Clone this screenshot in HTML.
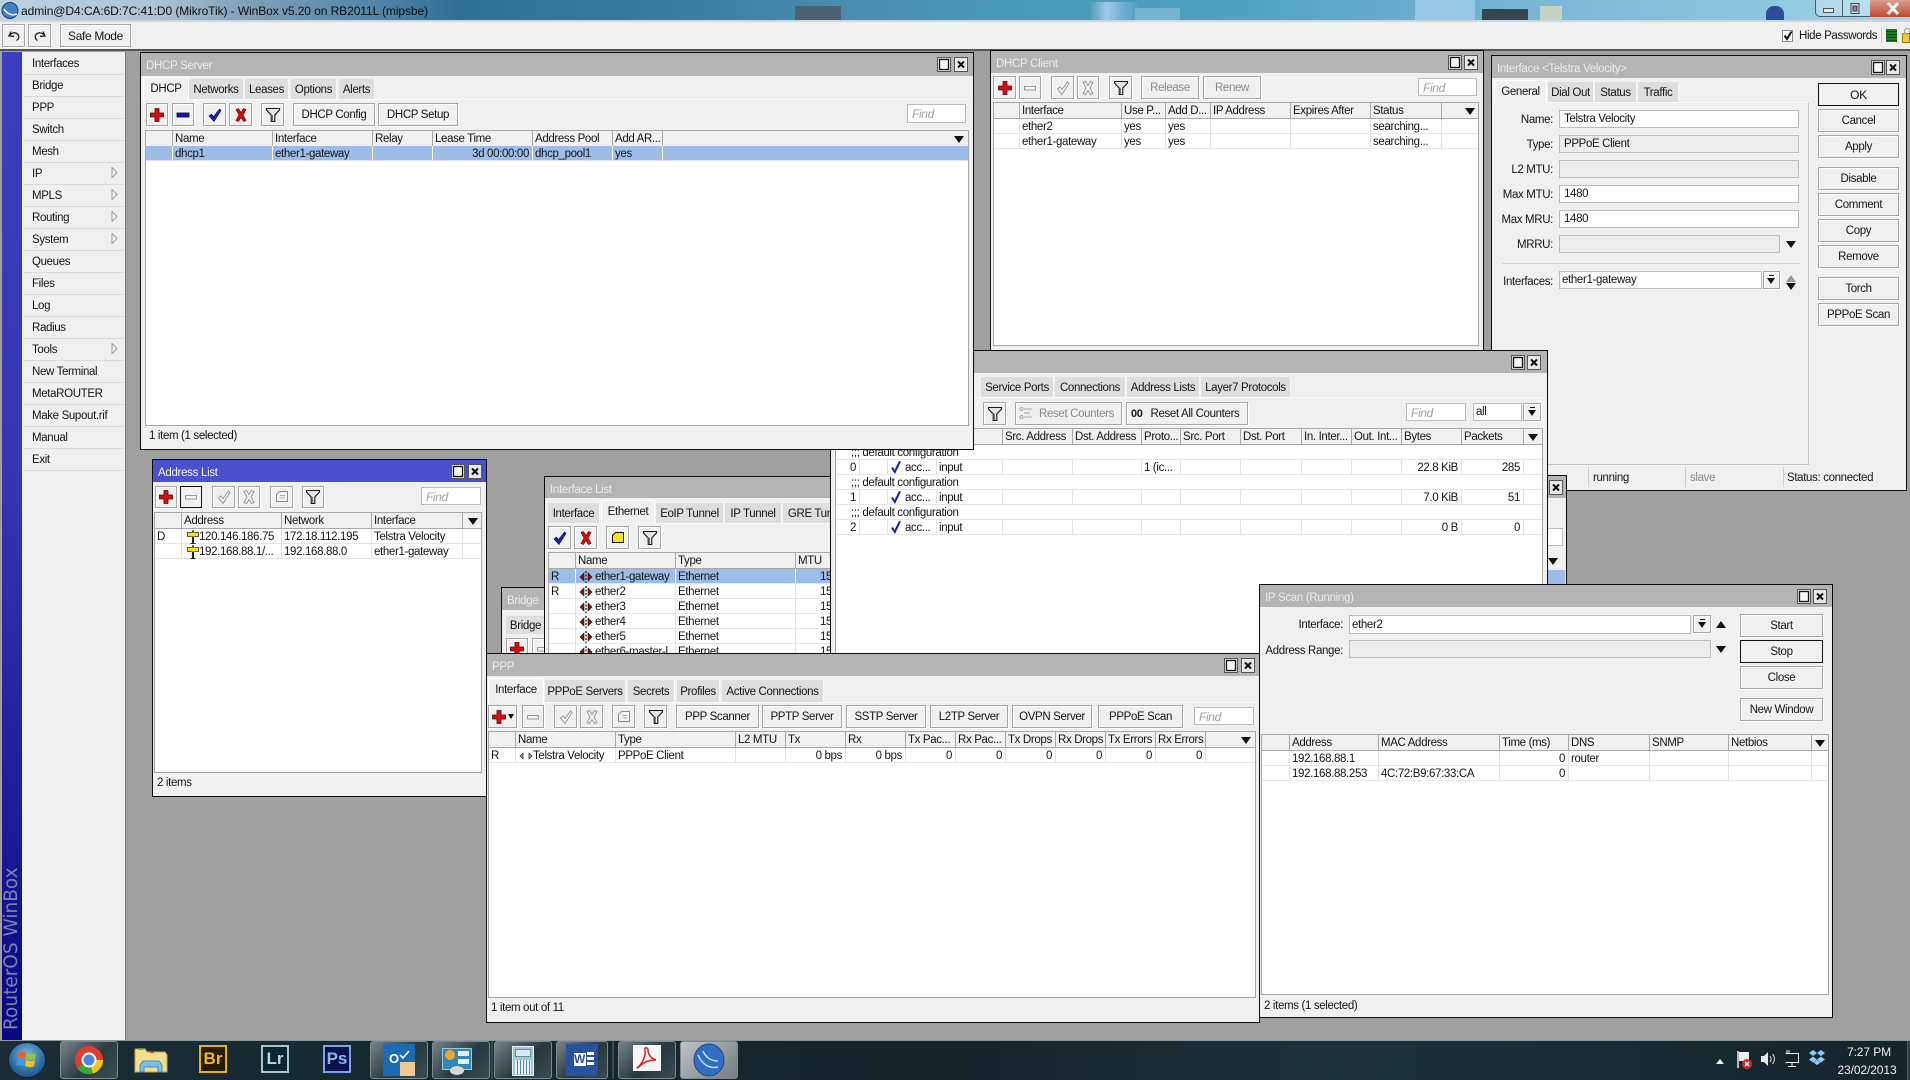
<!DOCTYPE html>
<html><head><meta charset="utf-8"><title>WinBox</title>
<style>
html,body{margin:0;padding:0;width:1910px;height:1080px;overflow:hidden;background:#a0a0a0;font:11.5px/14px "Liberation Sans",sans-serif;letter-spacing:-.35px;color:#151515}
div,b,i,span,svg{box-sizing:border-box}
.a{position:absolute}
.t{position:absolute;white-space:nowrap;font-weight:normal;font-style:normal}
.w{position:absolute;background:#f0f0f0;border:1px solid #0c0c0c}
.tb{position:absolute;background:#b4b4b4;color:#ececec;padding:1px 0 0 5px;line-height:24px;font-size:11.5px;letter-spacing:-.3px;white-space:nowrap;overflow:hidden}
.ctl{position:absolute;width:14px;height:15px}
.tab{position:absolute;background:#dedede;text-align:center;white-space:nowrap;overflow:hidden;border-right:1px solid #f8f8f8;font-weight:normal;padding-top:1px}
.on{background:#f0f0f0;border:1px solid #fff;border-bottom:0;z-index:1}
.ln{position:absolute;background:#fafafa;height:1px}
.bt{position:absolute;background:#f0f0f0;border:1px solid #a6a6a6;box-shadow:inset 1px 1px 0 #fff,1px 1px 0 #fff;text-align:center;white-space:nowrap;font-weight:normal;overflow:hidden;padding-top:1px}
.bt svg{position:absolute;left:50%;top:50%;margin:-8px 0 0 -8px;width:16px;height:16px}
.dk{border:1px solid #111;box-shadow:none}
.dis{color:#8a8a8a}
.fd{position:absolute;background:#fff;border:1px solid #bcbcbc;padding:1px 0 0 4px;white-space:nowrap;overflow:hidden;font-weight:normal;font-style:normal}
.gf{background:#ececec}
.fi{color:#a0a0a0;font-style:italic;font-size:12px}
.tbl{position:absolute;background:#fff;border:1px solid #a4a4a4}
.r{position:absolute;display:flex;height:15px;line-height:14px;white-space:nowrap;border-bottom:1px solid #e6e6e6}
.r>i{font-style:normal;display:block;border-right:1px solid #e2e2e2;padding:1px 0 0 2px;overflow:hidden;flex:none;height:100%}
.r>i.n{text-align:right;padding:1px 3px 0 0}
.h{background:#f0f0f0;height:17px;border-bottom:1px solid #a8a8a8;border-top:1px solid #a8a8a8}
.h>i{border-right:1px solid #a8a8a8}
.s{background:#9dbde8}
.s>i{border-right-color:#fff}
.lb{position:absolute;text-align:right;white-space:nowrap;font-weight:normal;margin-top:1px}
.m{position:absolute;left:24px;width:100px;height:22px;border-bottom:1px solid #dcdcdc;padding:1px 0 0 8px;line-height:21px;font-style:normal;font-weight:normal}
.m svg{position:absolute;left:87px;top:4px;width:7px;height:11px}
.tk{position:absolute;top:1041px;height:38px;width:58px;border:1px solid #7a8a90;border-radius:3px;background:linear-gradient(135deg,rgba(255,255,255,.42),rgba(255,255,255,.08) 55%,rgba(255,255,255,.16))}
.ic{position:absolute}
.lg{position:absolute;top:1045px;width:28px;height:28px;border:2px solid;text-align:center;font:bold 17px/24px "Liberation Sans",sans-serif;letter-spacing:0}
.ar{position:absolute;width:0;height:0;border-left:5px solid transparent;border-right:5px solid transparent;border-top:7px solid #111}
.up{border-top:0;border-bottom:7px solid #111}
.sb{position:absolute;white-space:nowrap;font-weight:normal;margin-top:1px}
.bl{position:absolute}
</style></head><body>
<svg width="0" height="0" style="position:absolute">
<symbol id="pl" viewBox="0 0 16 16"><path d="M6 1.500h4v4.500h4.500v4H10v4.500H6V10H1.500V6H6z" fill="#d90d0d" stroke="#4a0a0a" stroke-width=".8"/></symbol>
<symbol id="mi" viewBox="0 0 16 16"><rect x="2" y="6" width="12" height="4" fill="#1515b0" stroke="#060650" stroke-width=".8"/></symbol>
<symbol id="mg" viewBox="0 0 16 16"><rect x="2.500" y="6.500" width="11" height="3.500" fill="#f4f4f4" stroke="#9a9a9a"/></symbol>
<symbol id="ck" viewBox="0 0 16 16"><path d="M2 9l2.500-2 2 2.500L12.500 2 14 3.500 7 14.500z" fill="#1a24b0" stroke="#0a0a60" stroke-width=".6"/></symbol>
<symbol id="cg" viewBox="0 0 16 16"><path d="M2.500 9l2.500-2 2 2.500L12.500 2 14 3.500 7 14.500z" fill="#f4f4f4" stroke="#9a9a9a"/></symbol>
<symbol id="xx" viewBox="0 0 16 16"><path d="M3 2.500l2.500-1L8 5.500l2.500-4 2.500 1L10 8l3 5.500-2.500 1L8 10.500l-2.500 4-2.500-1L6 8z" fill="#d80c0c" stroke="#500" stroke-width=".6"/></symbol>
<symbol id="xg" viewBox="0 0 16 16"><path d="M3 2.500l2.500-1L8 5.500l2.500-4 2.500 1L10 8l3 5.500-2.500 1L8 10.500l-2.500 4-2.500-1L6 8z" fill="#f4f4f4" stroke="#9a9a9a"/></symbol>
<symbol id="fl" viewBox="0 0 16 16"><path d="M1.500 1.500h13v1.500L9.800 8v6.500H6.200V8L1.500 3z" fill="#dfe5e8" stroke="#181818" stroke-width="1.100"/><path d="M7.500 8v6" stroke="#777"/></symbol>
<symbol id="nt" viewBox="0 0 16 16"><path d="M2.500 5.500l3-3h8v10h-11z" fill="#f2e618" stroke="#111"/></symbol>
<symbol id="ng" viewBox="0 0 16 16"><path d="M2.500 5.500l3-3h8v10h-11z" fill="#f4f4f4" stroke="#8a8a8a"/><path d="M6 6.500h5M6 9h5" stroke="#aaa"/></symbol>
<symbol id="wm" viewBox="0 0 14 15"><rect x=".5" y=".5" width="13" height="14" fill="#e8e8e8" stroke="#555"/><rect x="2.500" y="2.500" width="9" height="10" fill="#f4f4f4" stroke="#111" stroke-width="1.300"/></symbol>
<symbol id="wc" viewBox="0 0 14 15"><rect x=".5" y=".5" width="13" height="14" fill="#e8e8e8" stroke="#555"/><path d="M4 4.500l6 6M10 4.500l-6 6" stroke="#111" stroke-width="2"/></symbol>
<symbol id="ma" viewBox="0 0 7 11"><path d="M1 .5v10l5-5z" fill="#f6f6f6" stroke="#9c9c9c"/></symbol>
<symbol id="et" viewBox="0 0 14 14"><path d="M5 3L1 7l4 4zM9 3l4 4-4 4z" fill="#8e1010" stroke="#111" stroke-width=".6"/><path d="M7 1v12" stroke="#111" stroke-width="1.200" stroke-dasharray="2 1.500"/></symbol>
<symbol id="ad" viewBox="0 0 14 14"><path d="M7 .5v13" stroke="#222" stroke-width="2"/><rect x="1.500" y="2.500" width="11" height="4" fill="#f6e21c" stroke="#333" stroke-width=".8"/><rect x="5.500" y="2.500" width="3" height="4" fill="#f6e21c"/><path d="M4.500 13.500h5" stroke="#222"/></symbol>
</svg>

<!-- title bar -->
<div class="a" style="left:0;top:0;width:1910px;height:21px;background:linear-gradient(90deg,#bcd2e2 0,#aec4d4 8%,#7fa0b8 13%,#4f83a6 20%,#2f6f95 24%,#3a7da2 36%,#4a8fb0 45%,#4a9ab8 55%,#4b9ebc 62%,#5aa6c6 68%,#6fb0d0 76%,#80bcd8 84%,#8cc6de 92%,#a8d8ea 100%)"></div>
<div class="a" style="left:795px;top:6px;width:46px;height:15px;background:#4a6272"></div>
<div class="a" style="left:1090px;top:2px;width:50px;height:19px;background:linear-gradient(90deg,#4b9ebc,#a4c8e6,#6faed2,#4b9ebc)"></div>
<div class="a" style="left:1135px;top:8px;width:45px;height:13px;background:#74b4d0"></div>
<div class="a" style="left:1415px;top:0;width:60px;height:21px;background:#95c8e4"></div>
<div class="a" style="left:1482px;top:9px;width:46px;height:12px;background:#36454f"></div>
<div class="a" style="left:1540px;top:6px;width:22px;height:15px;background:#c6d2c4"></div>
<div class="a" style="left:1766px;top:6px;width:18px;height:15px;background:#2a4c9a;border-radius:8px 8px 0 0"></div>
<div class="a" style="left:0;top:20px;width:1910px;height:2px;background:#c6d8e4"></div>
<svg class="ic" style="left:1px;top:1px" width="18" height="19" viewBox="0 0 18 19"><circle cx="9" cy="9.500" r="8" fill="#3f7fc4" stroke="#16446e"/><path d="M3 8c3 5 8 7 13 5" stroke="#e8f2fa" stroke-width="1.600" fill="none"/></svg>
<div class="t" style="left:21px;top:4px;font-size:12px;letter-spacing:-.08px;color:#0e0e0e">admin@D4:CA:6D:7C:41:D0 (MikroTik) - WinBox v5.20 on RB2011L (mipsbe)</div>
<div class="a" style="left:1815px;top:-1px;width:95px;height:18px;background:rgba(230,240,248,.35);border:1px solid #46586a;border-radius:0 0 5px 5px"></div>
<div class="a" style="left:1842px;top:0;width:1px;height:17px;background:#4a5a6a"></div>
<div class="a" style="left:1870px;top:0;width:40px;height:17px;background:linear-gradient(#d8a090,#c04a34)"></div>
<div class="a" style="left:1823px;top:8px;width:11px;height:5px;background:#e8e8e8;border:1px solid #555"></div>
<svg class="ic" style="left:1848px;top:1px" width="14" height="14" viewBox="0 0 14 14"><path d="M3 2.500h8v10H3z" fill="#d8dde2" stroke="#445"/><rect x="5" y="5" width="4" height="5" fill="#7a95aa" stroke="#334"/></svg>
<svg class="ic" style="left:1886px;top:2px" width="14" height="13" viewBox="0 0 14 13"><path d="M2 1l10 11M12 1L2 12" stroke="#f6f6f6" stroke-width="3"/></svg>

<!-- toolbar -->
<div class="a" style="left:0;top:22px;width:1910px;height:29px;background:#f0f0f0;border-bottom:2px solid #555"></div>
<b class="bt" style="left:2px;top:24px;width:23px;height:23px"><svg viewBox="0 0 16 16"><path d="M5 3.500L3 8l5 .3M3.500 7.500c2-3 6-3.500 8-1.500s1.500 5-1 6.500" fill="none" stroke="#222" stroke-width="1.300"/></svg></b>
<b class="bt" style="left:28px;top:24px;width:23px;height:23px"><svg viewBox="0 0 16 16"><path d="M11 3.500L13 8l-5 .3M12.500 7.500c-2-3-6-3.500-8-1.500s-1.500 5 1 6.500" fill="none" stroke="#222" stroke-width="1.300"/></svg></b>
<b class="bt" style="left:60px;top:24px;width:71px;height:23px;line-height:21px;font-size:12px">Safe Mode</b>
<div class="a" style="left:1782px;top:30px;width:11px;height:12px;background:#fff;border:1px solid #888"></div>
<svg class="ic" style="left:1782px;top:29px" width="12" height="13" viewBox="0 0 12 13"><path d="M2.500 6.500l2.500 3.500L9.500 2.500" fill="none" stroke="#111" stroke-width="2"/></svg>
<div class="t" style="left:1799px;top:29px;font-size:11.5px">Hide Passwords</div>
<div class="a" style="left:1881px;top:28px;width:1px;height:15px;background:#ccc"></div>
<div class="a" style="left:1886px;top:29px;width:11px;height:13px;background:repeating-linear-gradient(#1e7a1e 0,#1e7a1e 2px,#0e4f0e 2px,#0e4f0e 3px)"></div>
<div class="a" style="left:1902px;top:33px;width:8px;height:10px;background:#f2c63a;border:1px solid #a07a10"></div>
<div class="a" style="left:1904px;top:28px;width:6px;height:6px;border:1px solid #999;border-bottom:0;border-radius:3px 3px 0 0"></div>

<!-- sidebar -->
<div class="a" style="left:2px;top:52px;width:20px;height:988px;background:linear-gradient(#3d3dc0 0,#3434b4 45%,#1a1a98 80%,#060680 100%)"></div>
<div class="a" style="left:22px;top:52px;width:104px;height:988px;background:#f0f0f0;border-right:1px solid #777"></div>
<div class="t" style="left:1px;top:1030px;height:22px;transform-origin:0 0;transform:rotate(-90deg);font:18.5px/22px 'DejaVu Sans',sans-serif;letter-spacing:0;color:#7c82ac">RouterOS WinBox</div>
<b class="m" style="top:53px">Interfaces</b>
<b class="m" style="top:75px">Bridge</b>
<b class="m" style="top:97px">PPP</b>
<b class="m" style="top:119px">Switch</b>
<b class="m" style="top:141px">Mesh</b>
<b class="m" style="top:163px">IP<svg><use href="#ma"/></svg></b>
<b class="m" style="top:185px">MPLS<svg><use href="#ma"/></svg></b>
<b class="m" style="top:207px">Routing<svg><use href="#ma"/></svg></b>
<b class="m" style="top:229px">System<svg><use href="#ma"/></svg></b>
<b class="m" style="top:251px">Queues</b>
<b class="m" style="top:273px">Files</b>
<b class="m" style="top:295px">Log</b>
<b class="m" style="top:317px">Radius</b>
<b class="m" style="top:339px">Tools<svg><use href="#ma"/></svg></b>
<b class="m" style="top:361px">New Terminal</b>
<b class="m" style="top:383px">MetaROUTER</b>
<b class="m" style="top:405px">Make Supout.rif</b>
<b class="m" style="top:427px">Manual</b>
<b class="m" style="top:449px">Exit</b>

<!-- Bridge (back) -->
<div class="w" style="left:501px;top:587px;width:60px;height:100px"></div>
<div class="tb" style="left:502px;top:588px;width:58px;height:22px">Bridge</div>
<div class="tab" style="left:506px;top:616px;width:40px;height:18px;line-height:18px">Bridge</div>
<b class="bt" style="left:506px;top:638px;width:22px;height:22px"><svg><use href="#pl"/></svg></b>
<b class="bt" style="left:532px;top:638px;width:22px;height:22px"><svg><use href="#mg"/></svg></b>

<!-- Interface List -->
<div class="w" style="left:544px;top:476px;width:300px;height:200px"></div>
<div class="tb" style="left:545px;top:477px;width:298px;height:21px">Interface List</div>
<div class="tab" style="left:548px;top:503px;width:52px;height:20px;line-height:20px">Interface</div>
<div class="tab on" style="left:601px;top:500px;width:54px;height:24px;line-height:21px">Ethernet</div>
<div class="tab" style="left:656px;top:503px;width:68px;height:20px;line-height:20px">EoIP Tunnel</div>
<div class="tab" style="left:725px;top:503px;width:57px;height:20px;line-height:20px">IP Tunnel</div>
<div class="tab" style="left:783px;top:503px;width:70px;height:20px;line-height:20px">GRE Tunnel</div>
<div class="ln" style="left:545px;top:523px;width:290px"></div>
<b class="bt" style="left:548px;top:526px;width:23px;height:23px"><svg><use href="#ck"/></svg></b>
<b class="bt" style="left:574px;top:526px;width:23px;height:23px"><svg><use href="#xx"/></svg></b>
<b class="bt" style="left:606px;top:526px;width:23px;height:23px"><svg><use href="#nt"/></svg></b>
<b class="bt" style="left:638px;top:526px;width:23px;height:23px"><svg><use href="#fl"/></svg></b>
<div class="tbl" style="left:548px;top:552px;width:300px;height:120px"></div>
<div class="r h" style="left:549px;top:552px;width:300px"><i style="width:27px"></i><i style="width:100px">Name</i><i style="width:120px">Type</i><i style="width:50px">MTU</i></div>
<div class="r s" style="left:549px;top:569px;width:300px"><i style="width:27px">R</i><i style="width:100px;padding-left:19px">ether1-gateway</i><i style="width:120px">Ethernet</i><i style="width:50px;padding-left:24px">1500</i></div>
<div class="r" style="left:549px;top:584px;width:300px"><i style="width:27px">R</i><i style="width:100px;padding-left:19px">ether2</i><i style="width:120px">Ethernet</i><i style="width:50px;padding-left:24px">1500</i></div>
<div class="r" style="left:549px;top:599px;width:300px"><i style="width:27px"></i><i style="width:100px;padding-left:19px">ether3</i><i style="width:120px">Ethernet</i><i style="width:50px;padding-left:24px">1500</i></div>
<div class="r" style="left:549px;top:614px;width:300px"><i style="width:27px"></i><i style="width:100px;padding-left:19px">ether4</i><i style="width:120px">Ethernet</i><i style="width:50px;padding-left:24px">1500</i></div>
<div class="r" style="left:549px;top:629px;width:300px"><i style="width:27px"></i><i style="width:100px;padding-left:19px">ether5</i><i style="width:120px">Ethernet</i><i style="width:50px;padding-left:24px">1500</i></div>
<div class="r" style="left:549px;top:644px;width:300px"><i style="width:27px"></i><i style="width:100px;padding-left:19px">ether6-master-l</i><i style="width:120px">Ethernet</i><i style="width:50px;padding-left:24px">1500</i></div>
<svg class="ic" style="left:579px;top:570px" width="14" height="14"><use href="#et"/></svg>
<svg class="ic" style="left:579px;top:585px" width="14" height="14"><use href="#et"/></svg>
<svg class="ic" style="left:579px;top:600px" width="14" height="14"><use href="#et"/></svg>
<svg class="ic" style="left:579px;top:615px" width="14" height="14"><use href="#et"/></svg>
<svg class="ic" style="left:579px;top:630px" width="14" height="14"><use href="#et"/></svg>
<svg class="ic" style="left:579px;top:645px" width="14" height="14"><use href="#et"/></svg>

<!-- DHCP Client -->
<div class="w" style="left:990px;top:50px;width:494px;height:310px"></div>
<div class="tb" style="left:991px;top:51px;width:492px;height:22px">DHCP Client</div>
<svg class="ctl" style="left:1448px;top:55px"><use href="#wm"/></svg><svg class="ctl" style="left:1464px;top:55px"><use href="#wc"/></svg>
<b class="bt" style="left:993px;top:76px;width:23px;height:23px"><svg><use href="#pl"/></svg></b>
<b class="bt" style="left:1019px;top:76px;width:22px;height:23px"><svg><use href="#mg"/></svg></b>
<b class="bt" style="left:1051px;top:76px;width:23px;height:23px"><svg><use href="#cg"/></svg></b>
<b class="bt" style="left:1077px;top:76px;width:22px;height:23px"><svg><use href="#xg"/></svg></b>
<b class="bt" style="left:1109px;top:76px;width:23px;height:23px"><svg><use href="#fl"/></svg></b>
<b class="bt dis" style="left:1141px;top:76px;width:58px;height:23px;line-height:21px">Release</b>
<b class="bt dis" style="left:1203px;top:76px;width:58px;height:23px;line-height:21px">Renew</b>
<i class="fd fi" style="left:1418px;top:78px;width:59px;height:18px;line-height:17px">Find</i>
<div class="tbl" style="left:993px;top:102px;width:486px;height:244px"></div>
<div class="r h" style="left:994px;top:102px;width:484px"><i style="width:26px"></i><i style="width:102px">Interface</i><i style="width:44px">Use P...</i><i style="width:45px">Add D...</i><i style="width:80px">IP Address</i><i style="width:80px">Expires After</i><i style="width:71px">Status</i></div>
<div class="r" style="left:994px;top:119px;width:484px"><i style="width:26px"></i><i style="width:102px">ether2</i><i style="width:44px">yes</i><i style="width:45px">yes</i><i style="width:80px"></i><i style="width:80px"></i><i style="width:71px">searching...</i></div>
<div class="r" style="left:994px;top:134px;width:484px"><i style="width:26px"></i><i style="width:102px">ether1-gateway</i><i style="width:44px">yes</i><i style="width:45px">yes</i><i style="width:80px"></i><i style="width:80px"></i><i style="width:71px">searching...</i></div>
<div class="ar" style="left:1465px;top:108px"></div>

<!-- Interface Telstra -->
<div class="w" style="left:1491px;top:55px;width:416px;height:436px"></div>
<div class="tb" style="left:1492px;top:56px;width:414px;height:22px">Interface &lt;Telstra Velocity&gt;</div>
<svg class="ctl" style="left:1871px;top:60px"><use href="#wm"/></svg><svg class="ctl" style="left:1886px;top:60px"><use href="#wc"/></svg>
<div class="a" style="left:1494px;top:102px;width:315px;height:363px;border-right:1px solid #c4c4c4;border-bottom:1px solid #c4c4c4;border-top:1px solid #fafafa"></div>
<div class="tab on" style="left:1494px;top:80px;width:53px;height:23px;line-height:20px">General</div>
<div class="tab" style="left:1548px;top:82px;width:46px;height:20px;line-height:20px">Dial Out</div>
<div class="tab" style="left:1595px;top:82px;width:42px;height:20px;line-height:20px">Status</div>
<div class="tab" style="left:1638px;top:82px;width:41px;height:20px;line-height:20px">Traffic</div>
<b class="lb" style="right:357px;top:112px">Name:</b><i class="fd" style="left:1559px;top:110px;width:240px;height:18px;line-height:15px">Telstra Velocity</i>
<b class="lb" style="right:357px;top:137px">Type:</b><i class="fd gf" style="left:1559px;top:135px;width:240px;height:18px;line-height:15px">PPPoE Client</i>
<b class="lb" style="right:357px;top:162px">L2 MTU:</b><i class="fd gf" style="left:1559px;top:160px;width:240px;height:18px"></i>
<b class="lb" style="right:357px;top:187px">Max MTU:</b><i class="fd" style="left:1559px;top:185px;width:240px;height:18px;line-height:15px">1480</i>
<b class="lb" style="right:357px;top:212px">Max MRU:</b><i class="fd" style="left:1559px;top:210px;width:240px;height:18px;line-height:15px">1480</i>
<b class="lb" style="right:357px;top:237px">MRRU:</b><i class="fd gf" style="left:1559px;top:235px;width:221px;height:18px"></i>
<div class="ar" style="left:1786px;top:241px"></div>
<div class="a" style="left:1502px;top:263px;width:298px;height:1px;background:#d4d4d4"></div>
<b class="lb" style="right:357px;top:274px">Interfaces:</b><i class="fd" style="left:1559px;top:271px;width:203px;height:18px;line-height:15px;padding-left:2px">ether1-gateway</i>
<b class="bt" style="left:1763px;top:271px;width:17px;height:18px"><span class="ar" style="left:3px;top:6px;border-left-width:4px;border-right-width:4px;border-top-width:6px"></span><span class="a" style="left:5px;top:3px;width:5px;height:1px;background:#111"></span></b>
<div class="ar up" style="left:1786px;top:275px;border-bottom-color:#999"></div><div class="ar" style="left:1786px;top:283px"></div>
<b class="bt dk" style="left:1818px;top:83px;width:81px;height:23px;line-height:20px;font-size:12px">OK</b>
<b class="bt" style="left:1818px;top:109px;width:81px;height:23px;line-height:20px">Cancel</b>
<b class="bt" style="left:1818px;top:135px;width:81px;height:23px;line-height:20px">Apply</b>
<b class="bt" style="left:1818px;top:167px;width:81px;height:23px;line-height:20px">Disable</b>
<b class="bt" style="left:1818px;top:193px;width:81px;height:23px;line-height:20px">Comment</b>
<b class="bt" style="left:1818px;top:219px;width:81px;height:23px;line-height:20px">Copy</b>
<b class="bt" style="left:1818px;top:245px;width:81px;height:23px;line-height:20px">Remove</b>
<b class="bt" style="left:1818px;top:277px;width:81px;height:23px;line-height:20px">Torch</b>
<b class="bt" style="left:1818px;top:303px;width:81px;height:23px;line-height:20px">PPPoE Scan</b>
<div class="a" style="left:1588px;top:467px;width:1px;height:20px;background:#cfcfcf"></div>
<div class="a" style="left:1685px;top:467px;width:1px;height:20px;background:#cfcfcf"></div>
<div class="a" style="left:1783px;top:467px;width:1px;height:20px;background:#cfcfcf"></div>
<div class="sb" style="left:1593px;top:470px">running</div>
<div class="sb dis" style="left:1690px;top:470px">slave</div>
<div class="sb" style="left:1787px;top:470px">Status: connected</div>

<!-- back interface window sliver -->
<div class="w" style="left:1530px;top:475px;width:37px;height:120px"></div>
<div class="a" style="left:1531px;top:476px;width:35px;height:22px;background:#b4b4b4"></div>
<svg class="ctl" style="left:1549px;top:480px"><use href="#wc"/></svg>
<div class="a" style="left:1545px;top:528px;width:18px;height:18px;background:#fff;border:1px solid #bbb"></div>
<div class="ar" style="left:1548px;top:558px"></div>
<div class="a" style="left:1545px;top:570px;width:20px;height:15px;background:#9dbde8"></div>

<!-- Firewall -->
<div class="w" style="left:830px;top:350px;width:718px;height:320px"></div>
<div class="tb" style="left:831px;top:351px;width:716px;height:22px"></div>
<svg class="ctl" style="left:1511px;top:355px"><use href="#wm"/></svg><svg class="ctl" style="left:1527px;top:355px"><use href="#wc"/></svg>
<div class="tab" style="left:981px;top:377px;width:73px;height:20px;line-height:20px">Service Ports</div>
<div class="tab" style="left:1055px;top:377px;width:71px;height:20px;line-height:20px">Connections</div>
<div class="tab" style="left:1127px;top:377px;width:73px;height:20px;line-height:20px">Address Lists</div>
<div class="tab" style="left:1201px;top:377px;width:90px;height:20px;line-height:20px">Layer7 Protocols</div>
<div class="ln" style="left:975px;top:397px;width:570px"></div>
<b class="bt" style="left:983px;top:402px;width:23px;height:23px"><svg><use href="#fl"/></svg></b>
<b class="bt dis" style="left:1015px;top:402px;width:107px;height:23px;line-height:21px;padding-left:16px">Reset Counters</b>
<svg class="ic" style="left:1019px;top:406px" width="14" height="14" viewBox="0 0 14 14"><path d="M5 3h8M5 7h6M5 11h8" stroke="#a8a8a8"/><circle cx="2.500" cy="3" r="1.500" fill="none" stroke="#a8a8a8"/><circle cx="2.500" cy="11" r="1.500" fill="none" stroke="#a8a8a8"/></svg>
<b class="bt" style="left:1126px;top:402px;width:122px;height:23px;line-height:21px;padding-left:16px">Reset All Counters</b>
<span class="t" style="left:1131px;top:407px;font-weight:bold;font-size:11px">00</span>
<i class="fd fi" style="left:1406px;top:403px;width:60px;height:18px;line-height:17px">Find</i>
<i class="fd" style="left:1473px;top:403px;width:49px;height:18px;line-height:15px;padding-left:2px">all</i>
<b class="bt" style="left:1523px;top:403px;width:18px;height:18px"><span class="ar" style="left:4px;top:6px;border-left-width:4px;border-right-width:4px;border-top-width:6px"></span><span class="a" style="left:6px;top:3px;width:5px;height:1px;background:#111"></span></b>
<div class="tbl" style="left:835px;top:428px;width:708px;height:240px"></div>
<div class="r h" style="left:836px;top:428px;width:706px"><i style="width:167px"></i><i style="width:70px">Src. Address</i><i style="width:69px">Dst. Address</i><i style="width:39px">Proto...</i><i style="width:60px">Src. Port</i><i style="width:61px">Dst. Port</i><i style="width:50px">In. Inter...</i><i style="width:50px">Out. Int...</i><i style="width:60px">Bytes</i><i style="width:62px">Packets</i></div>
<div class="ar" style="left:1528px;top:434px"></div>
<div class="r" style="left:836px;top:445px;width:706px;padding:1px 0 0 15px">;;; default configuration</div>
<div class="r" style="left:836px;top:460px;width:706px"><i style="width:24px" class="n">0</i><i style="width:28px"></i><i style="width:49px;padding-left:17px">acc...</i><i style="width:66px">input</i><i style="width:70px"></i><i style="width:69px"></i><i style="width:39px">1 (ic...</i><i style="width:60px"></i><i style="width:61px"></i><i style="width:50px"></i><i style="width:50px"></i><i style="width:60px" class="n">22.8 KiB</i><i style="width:62px" class="n">285</i></div>
<div class="r" style="left:836px;top:475px;width:706px;padding:1px 0 0 15px">;;; default configuration</div>
<div class="r" style="left:836px;top:490px;width:706px"><i style="width:24px" class="n">1</i><i style="width:28px"></i><i style="width:49px;padding-left:17px">acc...</i><i style="width:66px">input</i><i style="width:70px"></i><i style="width:69px"></i><i style="width:39px"></i><i style="width:60px"></i><i style="width:61px"></i><i style="width:50px"></i><i style="width:50px"></i><i style="width:60px" class="n">7.0 KiB</i><i style="width:62px" class="n">51</i></div>
<div class="r" style="left:836px;top:505px;width:706px;padding:1px 0 0 15px">;;; default configuration</div>
<div class="r" style="left:836px;top:520px;width:706px"><i style="width:24px" class="n">2</i><i style="width:28px"></i><i style="width:49px;padding-left:17px">acc...</i><i style="width:66px">input</i><i style="width:70px"></i><i style="width:69px"></i><i style="width:39px"></i><i style="width:60px"></i><i style="width:61px"></i><i style="width:50px"></i><i style="width:50px"></i><i style="width:60px" class="n">0 B</i><i style="width:62px" class="n">0</i></div>
<svg class="ic" style="left:890px;top:460px" width="12" height="15" viewBox="0 0 12 15"><path d="M1 8l2-1 1.500 3L9 1l2 .5L5 14z" fill="#1a24b0"/></svg>
<svg class="ic" style="left:890px;top:490px" width="12" height="15" viewBox="0 0 12 15"><path d="M1 8l2-1 1.500 3L9 1l2 .5L5 14z" fill="#1a24b0"/></svg>
<svg class="ic" style="left:890px;top:520px" width="12" height="15" viewBox="0 0 12 15"><path d="M1 8l2-1 1.500 3L9 1l2 .5L5 14z" fill="#1a24b0"/></svg>

<!-- DHCP Server -->
<div class="w" style="left:140px;top:52px;width:834px;height:398px"></div>
<div class="tb" style="left:141px;top:53px;width:832px;height:23px">DHCP Server</div>
<svg class="ctl" style="left:937px;top:57px"><use href="#wm"/></svg><svg class="ctl" style="left:954px;top:57px"><use href="#wc"/></svg>
<div class="ln" style="left:143px;top:99px;width:826px"></div>
<div class="tab on" style="left:143px;top:77px;width:46px;height:23px;line-height:20px">DHCP</div>
<div class="tab" style="left:189px;top:79px;width:55px;height:20px;line-height:20px">Networks</div>
<div class="tab" style="left:245px;top:79px;width:44px;height:20px;line-height:20px">Leases</div>
<div class="tab" style="left:291px;top:79px;width:46px;height:20px;line-height:20px">Options</div>
<div class="tab" style="left:339px;top:79px;width:36px;height:20px;line-height:20px">Alerts</div>
<b class="bt" style="left:146px;top:103px;width:22px;height:23px"><svg><use href="#pl"/></svg></b>
<b class="bt" style="left:172px;top:103px;width:22px;height:23px"><svg><use href="#mi"/></svg></b>
<b class="bt" style="left:203px;top:103px;width:23px;height:23px"><svg><use href="#ck"/></svg></b>
<b class="bt" style="left:229px;top:103px;width:23px;height:23px"><svg><use href="#xx"/></svg></b>
<b class="bt" style="left:261px;top:103px;width:23px;height:23px"><svg><use href="#fl"/></svg></b>
<b class="bt" style="left:293px;top:103px;width:82px;height:23px;line-height:21px">DHCP Config</b>
<b class="bt" style="left:378px;top:103px;width:80px;height:23px;line-height:21px">DHCP Setup</b>
<i class="fd fi" style="left:907px;top:104px;width:59px;height:19px;line-height:17px">Find</i>
<div class="tbl" style="left:145px;top:130px;width:824px;height:296px"></div>
<div class="r h" style="left:146px;top:130px;width:822px"><i style="width:27px"></i><i style="width:100px">Name</i><i style="width:100px">Interface</i><i style="width:60px">Relay</i><i style="width:100px">Lease Time</i><i style="width:80px">Address Pool</i><i style="width:50px">Add AR...</i></div>
<div class="r s" style="left:146px;top:146px;width:822px"><i style="width:27px"></i><i style="width:100px">dhcp1</i><i style="width:100px">ether1-gateway</i><i style="width:60px"></i><i style="width:100px" class="n">3d 00:00:00</i><i style="width:80px">dhcp_pool1</i><i style="width:50px">yes</i></div>
<div class="ar" style="left:954px;top:136px"></div>
<div class="sb" style="left:149px;top:428px">1 item (1 selected)</div>

<!-- PPP -->
<div class="w" style="left:486px;top:653px;width:774px;height:370px"></div>
<div class="tb" style="left:487px;top:654px;width:772px;height:22px">PPP</div>
<svg class="ctl" style="left:1224px;top:658px"><use href="#wm"/></svg><svg class="ctl" style="left:1241px;top:658px"><use href="#wc"/></svg>
<div class="ln" style="left:488px;top:702px;width:768px"></div>
<div class="tab on" style="left:488px;top:678px;width:56px;height:25px;line-height:21px">Interface</div>
<div class="tab" style="left:545px;top:680px;width:81px;height:22px;line-height:22px">PPPoE Servers</div>
<div class="tab" style="left:628px;top:680px;width:47px;height:22px;line-height:22px">Secrets</div>
<div class="tab" style="left:677px;top:680px;width:43px;height:22px;line-height:22px">Profiles</div>
<div class="tab" style="left:722px;top:680px;width:102px;height:22px;line-height:22px">Active Connections</div>
<b class="bt" style="left:488px;top:705px;width:29px;height:23px"><svg style="left:2px;margin-left:0"><use href="#pl"/></svg><span class="ar" style="left:19px;top:8px;border-left-width:3px;border-right-width:3px;border-top-width:5px"></span></b>
<b class="bt" style="left:522px;top:705px;width:22px;height:23px"><svg><use href="#mg"/></svg></b>
<b class="bt" style="left:554px;top:705px;width:23px;height:23px"><svg><use href="#cg"/></svg></b>
<b class="bt" style="left:580px;top:705px;width:23px;height:23px"><svg><use href="#xg"/></svg></b>
<b class="bt" style="left:612px;top:705px;width:23px;height:23px"><svg><use href="#ng"/></svg></b>
<b class="bt" style="left:644px;top:705px;width:23px;height:23px"><svg><use href="#fl"/></svg></b>
<b class="bt" style="left:676px;top:705px;width:83px;height:23px;line-height:21px">PPP Scanner</b>
<b class="bt" style="left:762px;top:705px;width:80px;height:23px;line-height:21px">PPTP Server</b>
<b class="bt" style="left:846px;top:705px;width:80px;height:23px;line-height:21px">SSTP Server</b>
<b class="bt" style="left:930px;top:705px;width:78px;height:23px;line-height:21px">L2TP Server</b>
<b class="bt" style="left:1012px;top:705px;width:80px;height:23px;line-height:21px">OVPN Server</b>
<b class="bt" style="left:1098px;top:705px;width:85px;height:23px;line-height:21px">PPPoE Scan</b>
<i class="fd fi" style="left:1194px;top:707px;width:60px;height:18px;line-height:17px">Find</i>
<div class="tbl" style="left:488px;top:731px;width:768px;height:267px"></div>
<div class="r h" style="left:489px;top:731px;width:766px"><i style="width:27px"></i><i style="width:100px">Name</i><i style="width:120px">Type</i><i style="width:50px">L2 MTU</i><i style="width:60px">Tx</i><i style="width:60px">Rx</i><i style="width:50px">Tx Pac...</i><i style="width:50px">Rx Pac...</i><i style="width:50px">Tx Drops</i><i style="width:50px">Rx Drops</i><i style="width:50px">Tx Errors</i><i style="width:50px">Rx Errors</i></div>
<div class="r" style="left:489px;top:748px;width:766px"><i style="width:27px">R</i><i style="width:100px;padding-left:17px">Telstra Velocity</i><i style="width:120px">PPPoE Client</i><i style="width:50px"></i><i style="width:60px" class="n">0 bps</i><i style="width:60px" class="n">0 bps</i><i style="width:50px" class="n">0</i><i style="width:50px" class="n">0</i><i style="width:50px" class="n">0</i><i style="width:50px" class="n">0</i><i style="width:50px" class="n">0</i><i style="width:50px" class="n">0</i></div>
<svg class="ic" style="left:519px;top:750px" width="14" height="12" viewBox="0 0 14 12"><path d="M4 3L1 6l3 3zM10 3l3 3-3 3z" fill="#999" stroke="#333" stroke-width=".7"/></svg>
<div class="ar" style="left:1241px;top:737px"></div>
<div class="sb" style="left:491px;top:1000px">1 item out of 11</div>

<!-- IP Scan -->
<div class="w" style="left:1259px;top:584px;width:574px;height:434px"></div>
<div class="tb" style="left:1260px;top:585px;width:572px;height:22px">IP Scan (Running)</div>
<svg class="ctl" style="left:1797px;top:589px"><use href="#wm"/></svg><svg class="ctl" style="left:1813px;top:589px"><use href="#wc"/></svg>
<b class="lb" style="right:567px;top:617px">Interface:</b><i class="fd" style="left:1349px;top:615px;width:342px;height:19px;line-height:16px;padding-left:2px">ether2</i>
<b class="bt" style="left:1693px;top:615px;width:18px;height:18px"><span class="ar" style="left:4px;top:6px;border-left-width:4px;border-right-width:4px;border-top-width:6px"></span><span class="a" style="left:6px;top:3px;width:5px;height:1px;background:#111"></span></b>
<div class="ar up" style="left:1716px;top:621px"></div>
<b class="lb" style="right:567px;top:643px">Address Range:</b><i class="fd gf" style="left:1349px;top:640px;width:362px;height:18px"></i>
<div class="ar" style="left:1716px;top:646px"></div>
<b class="bt" style="left:1740px;top:614px;width:83px;height:23px;line-height:21px">Start</b>
<b class="bt dk" style="left:1740px;top:640px;width:83px;height:23px;line-height:21px">Stop</b>
<b class="bt" style="left:1740px;top:666px;width:83px;height:23px;line-height:21px">Close</b>
<b class="bt" style="left:1740px;top:698px;width:83px;height:23px;line-height:21px">New Window</b>
<div class="tbl" style="left:1261px;top:734px;width:568px;height:261px"></div>
<div class="r h" style="left:1262px;top:734px;width:566px"><i style="width:28px"></i><i style="width:89px">Address</i><i style="width:121px">MAC Address</i><i style="width:69px">Time (ms)</i><i style="width:81px">DNS</i><i style="width:79px">SNMP</i><i style="width:83px">Netbios</i></div>
<div class="r" style="left:1262px;top:751px;width:566px"><i style="width:28px"></i><i style="width:89px">192.168.88.1</i><i style="width:121px"></i><i style="width:69px" class="n">0</i><i style="width:81px">router</i><i style="width:79px"></i><i style="width:83px"></i></div>
<div class="r" style="left:1262px;top:766px;width:566px"><i style="width:28px"></i><i style="width:89px">192.168.88.253</i><i style="width:121px">4C:72:B9:67:33:CA</i><i style="width:69px" class="n">0</i><i style="width:81px"></i><i style="width:79px"></i><i style="width:83px"></i></div>
<div class="ar" style="left:1815px;top:740px"></div>
<div class="sb" style="left:1264px;top:998px">2 items (1 selected)</div>

<!-- Address List -->
<div class="w" style="left:152px;top:459px;width:335px;height:338px"></div>
<div class="tb" style="left:153px;top:460px;width:333px;height:22px;background:#4b50cc;color:#f4f4ff">Address List</div>
<svg class="ctl" style="left:451px;top:464px"><use href="#wm"/></svg><svg class="ctl" style="left:468px;top:464px"><use href="#wc"/></svg>
<b class="bt" style="left:155px;top:486px;width:22px;height:22px"><svg><use href="#pl"/></svg></b>
<b class="bt dk" style="left:180px;top:486px;width:22px;height:22px"><svg><use href="#mg"/></svg></b>
<b class="bt" style="left:212px;top:486px;width:23px;height:22px"><svg><use href="#cg"/></svg></b>
<b class="bt" style="left:238px;top:486px;width:22px;height:22px"><svg><use href="#xg"/></svg></b>
<b class="bt" style="left:270px;top:486px;width:23px;height:22px"><svg><use href="#ng"/></svg></b>
<b class="bt" style="left:302px;top:486px;width:22px;height:22px"><svg><use href="#fl"/></svg></b>
<i class="fd fi" style="left:421px;top:487px;width:60px;height:18px;line-height:17px">Find</i>
<div class="tbl" style="left:154px;top:512px;width:328px;height:261px"></div>
<div class="r h" style="left:155px;top:512px;width:326px"><i style="width:27px"></i><i style="width:100px">Address</i><i style="width:90px">Network</i><i style="width:91px">Interface</i></div>
<div class="r" style="left:155px;top:529px;width:326px"><i style="width:27px">D</i><i style="width:100px;padding-left:17px">120.146.186.75</i><i style="width:90px">172.18.112.195</i><i style="width:91px">Telstra Velocity</i></div>
<div class="r" style="left:155px;top:544px;width:326px"><i style="width:27px"></i><i style="width:100px;padding-left:17px">192.168.88.1/...</i><i style="width:90px">192.168.88.0</i><i style="width:91px">ether1-gateway</i></div>
<svg class="ic" style="left:186px;top:530px" width="14" height="14"><use href="#ad"/></svg>
<svg class="ic" style="left:186px;top:545px" width="14" height="14"><use href="#ad"/></svg>
<div class="ar" style="left:468px;top:518px"></div>
<div class="sb" style="left:157px;top:775px">2 items</div>

<!-- taskbar -->
<div class="a" style="left:0;top:1040px;width:1910px;height:40px;background:linear-gradient(90deg,#1a2c34 0,#142830 25%,#16242c 50%,#1b2f38 70%,#14242c 100%);border-top:1px solid #8a979c"></div>
<div class="a" style="left:8px;top:1042px;width:38px;height:36px;border-radius:50%;background:radial-gradient(circle at 50% 35%,#7cb6dc,#2a6aa0 60%,#123a5e);border:1px solid #0c2434"></div>
<svg class="ic" style="left:15px;top:1049px" width="24" height="22" viewBox="0 0 24 22"><path d="M3 4c3-2 5-1 8 0l-1 6c-3-1-5-2-8 0z" fill="#e8602c"/><path d="M12 4c3 1 5 2 9 0l-1 6c-3 2-6 1-9 0z" fill="#8ec63f"/><path d="M2 11c3-2 5-1 8 0l-1 6c-3-1-5-2-8 0z" fill="#3a9ae0"/><path d="M11 11c3 1 5 2 9 0l-1 6c-3 2-6 1-9 0z" fill="#f8c020"/></svg>
<div class="tk" style="left:60px"></div>
<svg class="ic" style="left:74px;top:1044px" width="30" height="32" viewBox="0 0 30 32"><circle cx="15" cy="16" r="14" fill="#e23c2c"/><path d="M15 16L3 24A14 14 0 0 0 22 28z" fill="#38a838"/><path d="M15 16h14a14 14 0 0 1-10 13.500z" fill="#f5c518"/><circle cx="15" cy="16" r="6.500" fill="#4a86e0" stroke="#fff" stroke-width="2"/></svg>
<svg class="ic" style="left:134px;top:1046px" width="34" height="30" viewBox="0 0 34 30"><path d="M1 3h10l2 3h18l2 3v17H1z" fill="#f3dd8e" stroke="#c4a850"/><rect x="5" y="2" width="4" height="2" fill="#39b54a"/><rect x="16" y="5" width="4" height="2" fill="#d33"/><path d="M6 26v-7l3-4h16l3 4v7h-4v-5H10v5z" fill="#7cbfe6" stroke="#4a8ab8"/></svg>
<div class="lg" style="left:199px;border-color:#e0b21c;background:#2a1a00;color:#f0b820">Br</div>
<div class="lg" style="left:261px;border-color:#a6c6d6;background:#0b2430;color:#b6d6e6">Lr</div>
<div class="lg" style="left:323px;border-color:#7aa4e8;background:#06104a;color:#8ab6f0">Ps</div>
<div class="tk" style="left:370px"></div>
<div class="a" style="left:383px;top:1044px;width:32px;height:32px;background:#1a6ab4"></div>
<div class="a" style="left:400px;top:1062px;width:15px;height:14px;background:#f0c890"></div>
<svg class="ic" style="left:399px;top:1050px" width="12" height="10" viewBox="0 0 12 10"><path d="M1 5l3 3 6-7" fill="none" stroke="#fff" stroke-width="1.500"/></svg>
<div class="t" style="left:389px;top:1051px;color:#fff;font:bold 13px/16px 'Liberation Sans',sans-serif">O</div>
<div class="tk" style="left:432px"></div>
<div class="a" style="left:442px;top:1048px;width:30px;height:22px;background:#2f88b8;border:1px solid #9cd"></div>
<div class="a" style="left:445px;top:1050px;width:10px;height:10px;border-radius:50%;background:#f5a623"></div>
<div class="a" style="left:458px;top:1051px;width:11px;height:5px;background:#dfeef6"></div>
<div class="a" style="left:458px;top:1059px;width:11px;height:5px;background:#dfeef6"></div>
<div class="a" style="left:450px;top:1066px;width:14px;height:9px;border-radius:50%;background:#d8d8d8"></div>
<div class="a" style="left:491px;top:1041px;width:2px;height:38px;background:#3a4a52"></div>
<div class="tk" style="left:494px"></div>
<div class="a" style="left:512px;top:1046px;width:22px;height:30px;background:#9fc6dc;border:1px solid #e8f2f8"></div>
<div class="a" style="left:515px;top:1049px;width:16px;height:8px;background:#d8ecf4;border:1px solid #6a8a9a"></div>
<div class="a" style="left:515px;top:1060px;width:16px;height:14px;background:repeating-linear-gradient(90deg,#e8f2f8 0,#e8f2f8 2px,#5a88a8 2px,#5a88a8 3px)"></div>
<div class="tk" style="left:556px;width:52px"></div>
<div class="a" style="left:566px;top:1044px;width:32px;height:32px;background:#28539c"></div>
<div class="a" style="left:574px;top:1053px;width:12px;height:13px;background:#fff"></div>
<div class="t" style="left:574px;top:1052px;color:#28539c;font:bold 12px/15px 'Liberation Sans',sans-serif;letter-spacing:0">W</div>
<div class="a" style="left:587px;top:1052px;width:7px;height:3px;background:#fff"></div>
<div class="a" style="left:587px;top:1057px;width:7px;height:3px;background:#fff"></div>
<div class="a" style="left:587px;top:1062px;width:7px;height:3px;background:#fff"></div>
<div class="a" style="left:612px;top:1041px;width:2px;height:38px;background:#3a4a52"></div>
<div class="tk" style="left:618px"></div>
<div class="a" style="left:633px;top:1045px;width:28px;height:26px;background:#f6f6f6"></div>
<svg class="ic" style="left:635px;top:1046px" width="24" height="24" viewBox="0 0 24 24"><path d="M3 21c4-3 8-11 7-17-1-3 3-3 3 0 0 5 4 9 8 10-5 0-11 1-15 5s-5 3-3 2z" fill="none" stroke="#d8201c" stroke-width="1.500"/></svg>
<div class="tk" style="left:680px;background:linear-gradient(135deg,rgba(255,255,255,.72),rgba(255,255,255,.4))"></div>
<svg class="ic" style="left:693px;top:1043px" width="32" height="34" viewBox="0 0 32 34"><ellipse cx="16" cy="17" rx="15" ry="16" fill="#2f6ec4" stroke="#1c4a80"/><path d="M5 12c4 9 11 14 20 12M10 8c3 7 8 10 15 10" stroke="#cfe2f2" stroke-width="1.500" fill="none"/></svg>
<div class="ar up" style="left:1716px;top:1059px;border-left-width:4px;border-right-width:4px;border-bottom-width:5px;border-bottom-color:#eee"></div>
<svg class="ic" style="left:1736px;top:1050px" width="18" height="20" viewBox="0 0 18 20"><path d="M2 1v17" stroke="#eee" stroke-width="1.500"/><path d="M3 2h10v9H3z" fill="#f0f0f0"/><circle cx="11" cy="14" r="5" fill="#d02c2c"/><path d="M9 12l4 4M13 12l-4 4" stroke="#fff" stroke-width="1.300"/></svg>
<svg class="ic" style="left:1760px;top:1051px" width="16" height="16" viewBox="0 0 16 16"><path d="M1 5h3l4-4v14l-4-4H1z" fill="#e8e8e8"/><path d="M10 5c1.500 2 1.500 4 0 6M12.500 3c2.500 3 2.500 7 0 10" stroke="#ddd" fill="none"/></svg>
<svg class="ic" style="left:1784px;top:1049px" width="16" height="19" viewBox="0 0 16 19"><path d="M3 1v4M5 1v4" stroke="#eee"/><path d="M1.500 4.500h13v9h-13" fill="#16242c" stroke="#eee"/><path d="M8 14v3M4 17.500h8" stroke="#eee"/></svg>
<svg class="ic" style="left:1809px;top:1049px" width="16" height="18" viewBox="0 0 16 18"><path d="M4 1l4 3-4 3-4-3zM12 1l4 3-4 3-4-3zM4 7.500l4 3-4 3-4-3zM12 7.500l4 3-4 3-4-3zM8 11l3.500 2.500L8 16l-3.500-2.500z" fill="#8ec8f4"/></svg>
<div class="t" style="left:1847px;top:1045px;width:40px;text-align:center;color:#f0f0f0;font-size:12px;letter-spacing:-.1px">7:27 PM</div>
<div class="t" style="left:1837px;top:1063px;width:60px;text-align:center;color:#f0f0f0;font-size:12px;letter-spacing:-.1px">23/02/2013</div>
<div class="a" style="left:1907px;top:1041px;width:3px;height:39px;background:rgba(255,255,255,.12);border-left:1px solid #556"></div>
</body></html>
